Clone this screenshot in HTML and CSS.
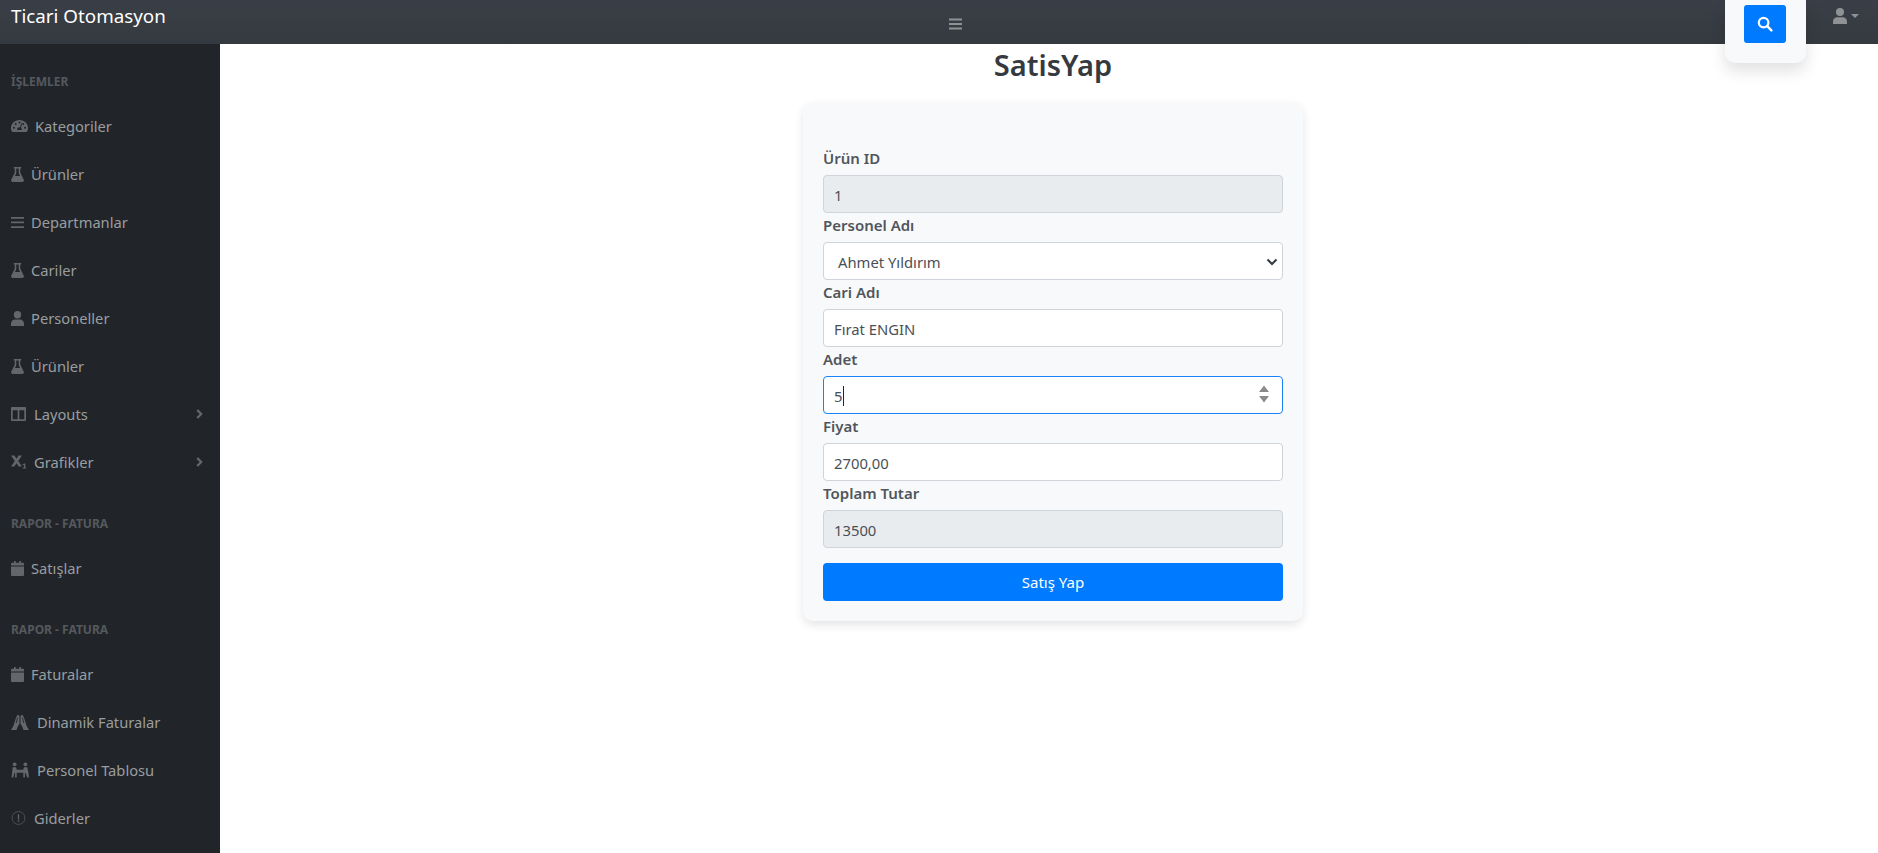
FILE: index.html
```html
<!DOCTYPE html>
<html lang="tr">
<head>
<meta charset="utf-8">
<title>SatisYap</title>
<link rel="stylesheet" href="styles.css">
</head>
<body>
<header class="topbar">
  <a class="brand">Ticari Otomasyon</a>
  <div class="toggle"><svg viewBox="0 0 14 12" class="ic-bars"><path d="M0 0h14v2.200H0zM0 4.900h14v2.200H0zM0 9.800h14V12H0z"/></svg></div>
  <div class="search-box"><button class="search-btn" aria-label="search"><svg viewBox="0 0 16 16" class="ic-search"><circle cx="6.600" cy="6.600" r="4.800" fill="none" stroke="#fff" stroke-width="2.200"/><path d="M10.200 10.200l4.200 4.200" stroke="#fff" stroke-width="2.400" stroke-linecap="round"/></svg></button></div>
  <div class="user"><svg viewBox="0 0 14 16" class="ic-user"><circle cx="7" cy="4" r="4"/><path d="M0 16v-2.400C0 10.900 2 9.200 4.200 9.200h5.600c2.200 0 4.200 1.700 4.200 4.400V16z"/></svg><span class="caret"></span></div>
</header>
<div class="layout">
  <nav class="sidebar">
    <div class="heading">İŞLEMLER</div>
    <a class="link"><svg class="ic i-gauge" viewBox="0 0 17 12"><path fill-rule="evenodd" d="M8.500 0C3.800 0 0 3.600 0 8.200c0 1.300.3 2.500.9 3.400.1.200.4.400.7.400h13.800c.3 0 .6-.2.700-.4.600-.9.900-2.100.9-3.400C17 3.600 13.200 0 8.500 0zM8.500 1.600a1 1 0 1 1 0 2 1 1 0 0 1 0-2zM3 8.800a1 1 0 1 1 0-2 1 1 0 0 1 0 2zM4.700 5a1 1 0 1 1 0-2 1 1 0 0 1 0 2zM12.300 5a1 1 0 1 1 0-2 1 1 0 0 1 0 2zM14 8.800a1 1 0 1 1 0-2 1 1 0 0 1 0 2zM10.300 3.200l.9.300-1.200 4.200c.5.400.8 1 .8 1.600 0 .3 0 .5-.1.700H6.300c-.1-.2-.1-.4-.1-.7 0-1.200 1-2.100 2.300-2.100h.6z"/></svg><span>Kategoriler</span></a>
    <a class="link"><svg class="ic i-13" viewBox="0 0 13 15"><path fill-rule="evenodd" d="M2.800 0h7.400v1.500H9.300v4.300l3.400 6.700c.6 1.200-.2 2.500-1.500 2.500H1.800C.500 15-.3 13.700.3 12.500l3.400-6.700V1.500h-.9zM5.300 1.500v4.700L3.900 9h5.200L7.700 6.200V1.500z"/></svg><span>Ürünler</span></a>
    <a class="link"><svg class="ic i-13" viewBox="0 0 13 15"><path d="M0 2h13v1.700H0zM0 6.600h13v1.700H0zM0 11.200h13v1.700H0z"/></svg><span>Departmanlar</span></a>
    <a class="link"><svg class="ic i-13" viewBox="0 0 13 15"><path fill-rule="evenodd" d="M2.800 0h7.400v1.500H9.300v4.300l3.400 6.700c.6 1.200-.2 2.500-1.500 2.500H1.800C.500 15-.3 13.700.3 12.500l3.400-6.700V1.500h-.9zM5.300 1.500v4.700L3.900 9h5.200L7.700 6.200V1.500z"/></svg><span>Cariler</span></a>
    <a class="link"><svg class="ic i-13" viewBox="0 0 13 15"><circle cx="6.500" cy="3.700" r="3.700"/><path d="M0 15v-2.200C0 10.300 1.800 8.500 3.800 8.500h5.400c2 0 3.800 1.800 3.800 4.300V15z"/></svg><span>Personeller</span></a>
    <a class="link"><svg class="ic i-13" viewBox="0 0 13 15"><path fill-rule="evenodd" d="M2.800 0h7.400v1.500H9.300v4.300l3.400 6.700c.6 1.200-.2 2.500-1.500 2.500H1.800C.500 15-.3 13.700.3 12.500l3.400-6.700V1.500h-.9zM5.300 1.500v4.700L3.900 9h5.200L7.700 6.200V1.500z"/></svg><span>Ürünler</span></a>
    <a class="link"><svg class="ic i-15" viewBox="0 0 14 13"><path fill-rule="evenodd" d="M1 0h12a1 1 0 0 1 1 1v11a1 1 0 0 1-1 1H1a1 1 0 0 1-1-1V1a1 1 0 0 1 1-1zM1.600 3v8.400h4.600V3zM7.800 3v8.400h4.600V3z"/></svg><span>Layouts</span><svg class="chev" viewBox="0 0 7 10"><path d="M1.200 1l4 4-4 4" fill="none" stroke-width="2.300"/></svg></a>
    <a class="link"><svg class="ic i-15" viewBox="0 0 15 13"><path d="M0 0h3.300l2.200 3.300L7.700 0H11L7.200 5.500 11 11H7.700L5.500 7.700 3.300 11H0l3.800-5.500z"/><path d="M11.600 8.700l1.700-.8h1v4.100h1V13h-3.600v-1h1.200V9.300l-1.300.4z"/></svg><span>Grafikler</span><svg class="chev" viewBox="0 0 7 10"><path d="M1.200 1l4 4-4 4" fill="none" stroke-width="2.300"/></svg></a>
    <div class="heading">RAPOR - FATURA</div>
    <a class="link"><svg class="ic i-13" viewBox="0 0 13 15"><path d="M0 5.500h13V14a1 1 0 0 1-1 1H1a1 1 0 0 1-1-1zM3 0h1.700v1.800h3.600V0H10v1.800h2a1 1 0 0 1 1 1v1.700H0V2.800a1 1 0 0 1 1-1h2z"/></svg><span>Satışlar</span></a>
    <div class="heading">RAPOR - FATURA</div>
    <a class="link"><svg class="ic i-13" viewBox="0 0 13 15"><path d="M0 5.500h13V14a1 1 0 0 1-1 1H1a1 1 0 0 1-1-1zM3 0h1.700v1.800h3.600V0H10v1.800h2a1 1 0 0 1 1 1v1.700H0V2.800a1 1 0 0 1 1-1h2z"/></svg><span>Faturalar</span></a>
    <a class="link"><svg class="ic i-18" viewBox="0 0 18 16"><path d="M8.500 3.200v6.600l-1.700 2.800L5.500 16H0l2.400-4 2.400-7.700C5.300 2.800 6 1.700 6.800.8 7.900 1 8.500 2 8.500 3.200zM9.500 3.200v6.600l1.700 2.800 1.300 3.400H18l-2.400-4-2.400-7.700C12.700 2.800 12 1.700 11.200.8 10.100 1 9.500 2 9.500 3.200z"/><path class="slit" d="M6.500 3.500L5.300 9M11.500 3.500L12.700 9"/></svg><span>Dinamik Faturalar</span></a>
    <a class="link"><svg class="ic i-18" viewBox="0 0 19 16"><circle cx="3.800" cy="2" r="2"/><circle cx="15.200" cy="2" r="2"/><path d="M1.800 5h3.400l1 2.700h6.600l1-2.700h3.400l1 4.500.8 6.500h-1.900L15.500 11.500l-.8-.5v5H13v-5.200H6V16H4.300v-5l-.8.5L2.400 16H.5l.8-6.500z"/></svg><span>Personel Tablosu</span></a>
    <a class="link"><svg class="ic i-15" viewBox="0 0 15 15"><circle class="ring" cx="7.500" cy="7.500" r="6.900"/><path d="M6.800 3.500h1.400v5.500H6.800zM6.800 10h1.400v1.400H6.800z"/></svg><span>Giderler</span></a>
  </nav>
  <main class="main">
    <h1 class="title">SatisYap</h1>
    <form class="card">
      <label class="lbl">Ürün ID</label>
      <div class="field off">1</div>
      <label class="lbl">Personel Adı</label>
      <div class="field sel">Ahmet Yıldırım<svg class="selarrow" viewBox="0 0 12 8"><path d="M1.500 1.500L6 6l4.500-4.500" fill="none" stroke="#343a40" stroke-width="2"/></svg></div>
      <label class="lbl">Cari Adı</label>
      <div class="field">Fırat ENGIN</div>
      <label class="lbl">Adet</label>
      <div class="field focus">5<span class="cursor"></span><svg class="spin" viewBox="0 0 12 19"><path d="M6 1l5 6.500H1zM6 18l-5-6.500h10z" fill="#8a8a8a"/></svg></div>
      <label class="lbl">Fiyat</label>
      <div class="field">2700,00</div>
      <label class="lbl">Toplam Tutar</label>
      <div class="field off">13500</div>
      <button type="button" class="submit">Satış Yap</button>
    </form>
  </main>
</div>
</body>
</html>
```
FILE: styles.css
```css
* { box-sizing: border-box; }
html, body { margin: 0; height: 100%; overflow: hidden; }
body { font-family: "Noto Sans", "Open Sans", sans-serif; color: #212529; background: #fff; font-size: 15px; }
.topbar { height: 44px; background: linear-gradient(#3a3f47, #343a40); display: flex; position: relative; }
.brand { width: 949px; padding: 1px 0 0 11px; font-size: 18.8px; line-height: 30px; color: #fff; }
.toggle { width: 13px; padding-top: 18px; }
.ic-bars { display: block; width: 13px; height: 12px; fill: #8f9295; }
.search-box { position: absolute; left: 1725px; top: 0; width: 81px; height: 63px; background: #f8f9fa; border-radius: 0 0 10px 10px; box-shadow: 0 8px 16px rgba(0,0,0,.12); padding: 5px 19px; z-index: 3; }
.search-btn { width: 42px; height: 38px; padding: 0; background: #007bff; border: 0; border-radius: 3px; display: flex; align-items: center; justify-content: center; }
.ic-search { width: 16px; height: 16px; }
.user { position: absolute; left: 1833px; top: 8px; display: flex; gap: 4px; }
.ic-user { width: 14px; height: 16px; fill: #8f9295; }
.caret { margin-top: 6px; border: 4px solid transparent; border-top-color: #8f9295; border-bottom: 0; }
.layout { display: flex; height: 809px; }
.sidebar { width: 220px; background: #212529; padding: 0 0 0 11px; flex: none; }
.heading { font-size: 12px; font-weight: 700; color: #55595d; line-height: 16px; padding-top: 30px; margin-bottom: 12px; }
.link { display: flex; align-items: center; height: 48px; color: #9a9da0; font-size: 14.7px; }
.ic { fill: #63676b; flex: none; display: block; }
.slit { fill: none; stroke: #212529; stroke-width: .8; }
.ring { fill: none; stroke: #4f5357; stroke-width: 1; }
.chev { width: 7px; height: 10px; stroke: #63676b; position: absolute; left: 196px; }
.i-gauge { width: 17px; height: 12px; margin-right: 7px; }
.i-13 { width: 13px; height: 15px; margin-right: 7px; }
.i-15 { width: 15px; height: 14px; margin-right: 8px; }
.i-18 { width: 18px; height: 16px; margin-right: 8px; }
.main { flex: 1; padding-left: 8px; display: flex; flex-direction: column; align-items: center; }
.title { margin: 0; font-size: 29px; font-weight: 600; line-height: 42px; height: 58px; color: #343a40; }
.card { width: 500px; height: 519px; background: #f8f9fa; border-radius: 10px; box-shadow: 0 4px 10px rgba(0,0,0,.1); padding: 44px 20px 0; }
.lbl { display: block; height: 29px; font-size: 15px; font-weight: 600; line-height: 25px; color: #50565c; }
.field { display: flex; align-items: center; position: relative; height: 38px; background: #fff; border: 1px solid #ced4da; border-radius: 4px; padding: 2px 10px 0; font-size: 14.8px; color: #495057; }
.off { background: #e9ecef; }
.sel { padding-left: 14px; }
.selarrow { position: absolute; right: 4px; top: 15px; width: 12px; height: 8px; }
.focus { border-color: #1a82f7; }
.cursor { width: 1px; height: 20px; background: #212529; margin-left: 1px; }
.spin { position: absolute; right: 12px; top: 7px; width: 12px; height: 20px; }
.submit { display: block; width: 100%; height: 38px; margin-top: 15px; border: 0; border-radius: 4px; background: #007bff; color: #fff; font: inherit; font-size: 15px; }
```
